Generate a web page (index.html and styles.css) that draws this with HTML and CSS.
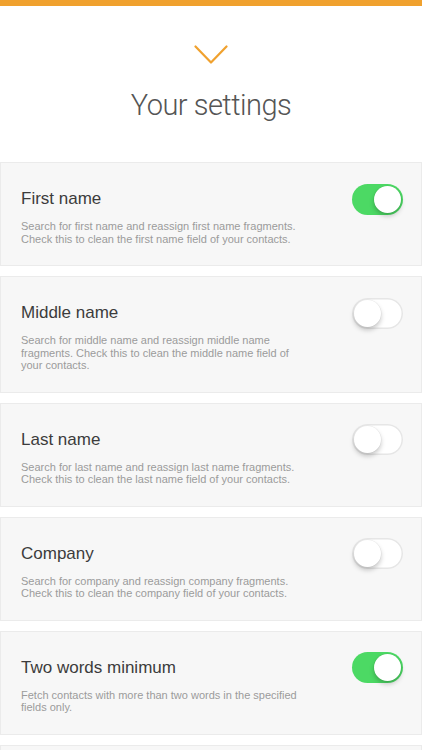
FILE: index.html
```html
<!DOCTYPE html>
<html lang="en">
<head>
    <meta charset="UTF-8">
    <meta name="viewport" content="width=device-width, initial-scale=1.0">
    <title>Your settings</title>
    <link rel="stylesheet" href="styles.css">
</head>
<body>

    <div class="top-bar"></div>

    <header class="page-header">
        <svg class="chevron" width="34" height="20" viewBox="0 0 34 20">
            <polyline points="1.5,1.5 17,17.5 32.5,1.5" fill="none" stroke="#f0a12e" stroke-width="2.2" stroke-linecap="round" stroke-linejoin="round"/>
        </svg>
        <h1>Your settings</h1>
    </header>

    <main class="settings-list">
        <section class="setting">
            <div class="setting-head">
                <h2>First name</h2>
                <span class="toggle on"><span class="knob"></span></span>
            </div>
            <p>Search for first name and reassign first name fragments. Check this to clean the first name field of your contacts.</p>
        </section>

        <section class="setting">
            <div class="setting-head">
                <h2>Middle name</h2>
                <span class="toggle"><span class="knob"></span></span>
            </div>
            <p>Search for middle name and reassign middle name fragments. Check this to clean the middle name field of your contacts.</p>
        </section>

        <section class="setting">
            <div class="setting-head">
                <h2>Last name</h2>
                <span class="toggle"><span class="knob"></span></span>
            </div>
            <p>Search for last name and reassign last name fragments. Check this to clean the last name field of your contacts.</p>
        </section>

        <section class="setting">
            <div class="setting-head">
                <h2>Company</h2>
                <span class="toggle"><span class="knob"></span></span>
            </div>
            <p>Search for company and reassign company fragments. Check this to clean the company field of your contacts.</p>
        </section>

        <section class="setting">
            <div class="setting-head">
                <h2>Two words minimum</h2>
                <span class="toggle on"><span class="knob"></span></span>
            </div>
            <p>Fetch contacts with more than two words in the specified fields only.</p>
        </section>

        <section class="setting">
            <div class="setting-head"></div>
        </section>
    </main>

</body>
</html>
```

FILE: styles.css
```css
/* Reset */
* {
    margin: 0;
    padding: 0;
    box-sizing: border-box;
}

body {
    font-family: 'Liberation Sans', Arial, sans-serif;
    background: #ffffff;
    color: #444444;
}

/* Barra laranja do topo */
.top-bar {
    height: 6px;
    background-color: #f0a12e;
}

/* Cabeçalho */
.page-header {
    display: flex;
    flex-direction: column;
    align-items: center;
    padding-top: 39px;
    height: 156px;
}

.chevron {
    display: block;
}

h1 {
    font-family: 'Roboto', 'Liberation Sans', sans-serif;
    font-weight: 300;
    font-size: 29px;
    line-height: 36px;
    color: #555555;
    margin-top: 22px;
    letter-spacing: -0.5px;
}

/* Lista de opções */
.settings-list {
    display: flex;
    flex-direction: column;
    gap: 10px;
}

.setting {
    background-color: #f7f7f7;
    border: 1px solid #ebebeb;
    padding: 20px 18px 20px 20px;
}

.setting-head {
    display: flex;
    align-items: center;
    justify-content: space-between;
    height: 32px;
}

h2 {
    font-size: 17px;
    font-weight: normal;
    color: #3c3c3c;
}

.setting p {
    margin-top: 5px;
    max-width: 282px;
    font-size: 11px;
    line-height: 12.5px;
    color: #9b9b9b;
}

/* Interruptor estilo iOS */
.toggle {
    position: relative;
    width: 51px;
    height: 31px;
    border-radius: 16px;
    background-color: #ffffff;
    box-shadow: inset 0 0 0 1.5px #e6e6e6;
    flex-shrink: 0;
}

.toggle.on {
    background-color: #4cd964;
    box-shadow: none;
}

.knob {
    position: absolute;
    top: 2px;
    left: 2px;
    width: 27px;
    height: 27px;
    border-radius: 50%;
    background-color: #ffffff;
    box-shadow: 0 3px 5px rgba(0, 0, 0, 0.22), 0 0 0 0.5px rgba(0, 0, 0, 0.06);
}

.toggle.on .knob {
    left: 22px;
}
```
